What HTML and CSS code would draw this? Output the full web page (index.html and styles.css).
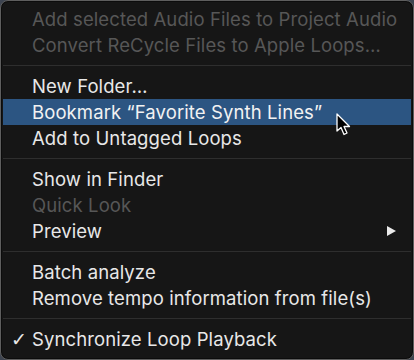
FILE: index.html
```html
<!DOCTYPE html>
<html>
<head>
<meta charset="utf-8">
<link rel="stylesheet" href="styles.css">
</head>
<body>
<div class="menu">
  <div class="row disabled">Add selected Audio Files to Project Audio</div>
  <div class="row disabled">Convert ReCycle Files to Apple Loops…</div>
  <div class="sep"></div>
  <div class="row">New Folder…</div>
  <div class="row active">Bookmark “Favorite Synth Lines”</div>
  <div class="row">Add to Untagged Loops</div>
  <div class="sep"></div>
  <div class="row">Show in Finder</div>
  <div class="row disabled">Quick Look</div>
  <div class="row">Preview<span class="sub"></span></div>
  <div class="sep"></div>
  <div class="row">Batch analyze</div>
  <div class="row">Remove tempo information from file(s)</div>
  <div class="sep"></div>
  <div class="row"><span class="check">✓</span>Synchronize Loop Playback</div>
  <svg class="cursor" width="16" height="24" viewBox="0 0 16 24">
    <path d="M1 1 L1 18 L5 14.5 L8 21.5 L11 20 L8 13.5 L13.5 13.5 Z" fill="#000" stroke="#fff" stroke-width="1.3" stroke-linejoin="round"/>
  </svg>
</div>
</body>
</html>
```
FILE: styles.css
```css
html, body {
  margin: 0;
  padding: 0;
  background: #3d4450;
}
body {
  width: 414px;
  height: 360px;
  overflow: hidden;
}
.menu {
  position: relative;
  box-sizing: border-box;
  width: 414px;
  height: 360px;
  background: #161616;
  border: 1px solid #5e5e5e;
  box-shadow: inset 0 0 0 1px #0c0c0c;
  border-radius: 8px;
  padding: 5px 2px 0 2px;
  font-family: Inter, "Noto Sans", sans-serif;
  font-size: 18.5px;
  color: #e8e8e8;
}
.row {
  position: relative;
  height: 26px;
  line-height: 26px;
  padding-left: 29px;
  white-space: nowrap;
  letter-spacing: 0.1px;
}
.row.disabled {
  color: #575757;
}
.row.active {
  background: #2c5582;
  color: #f2f2f2;
}
.sep {
  height: 15px;
  display: flex;
  align-items: center;
}
.sep::before {
  content: "";
  flex: 1;
  height: 1px;
  background: #2e2e2e;
}
.check {
  position: absolute;
  left: 8px;
  top: 0;
  font-size: 19px;
  font-family: "DejaVu Sans", sans-serif;
}
.sub {
  position: absolute;
  right: 15px;
  top: 8px;
  width: 0;
  height: 0;
  border-top: 5.5px solid transparent;
  border-bottom: 5.5px solid transparent;
  border-left: 9px solid #eaeaea;
}
.cursor {
  position: absolute;
  left: 335px;
  top: 112px;
}
```
